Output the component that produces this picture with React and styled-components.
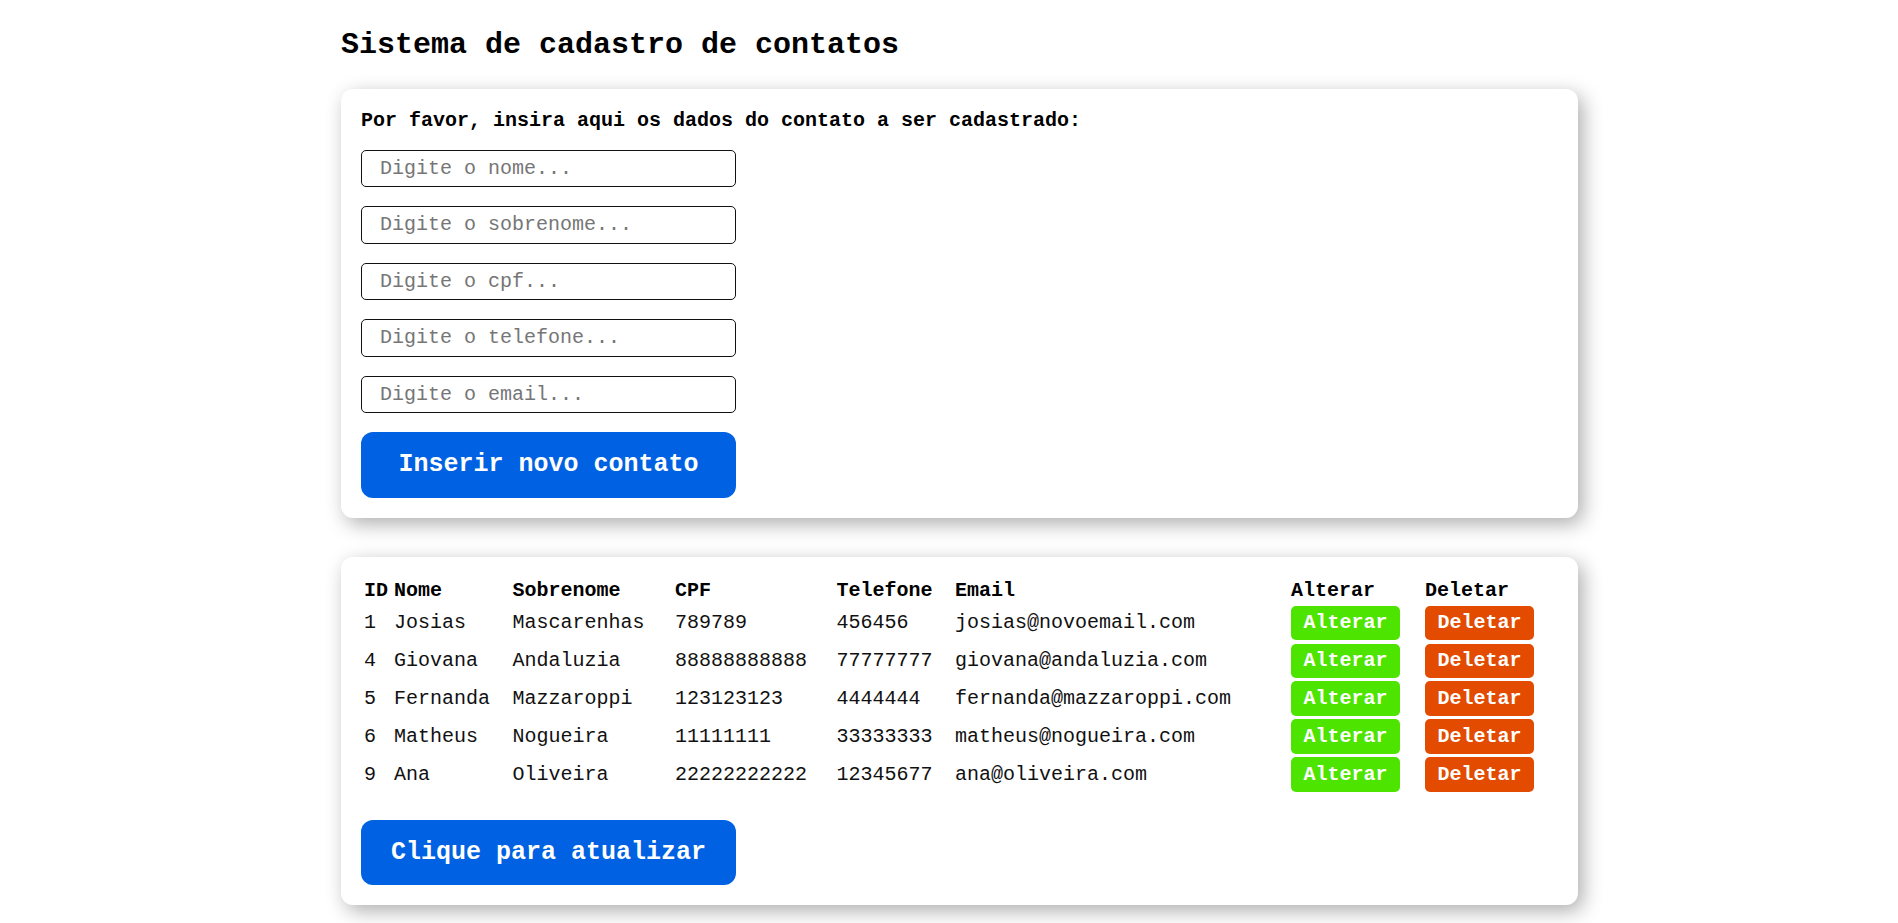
import React, { useState } from "react";
import styled, { createGlobalStyle } from "styled-components";

const GlobalStyle = createGlobalStyle`
  body {
    margin: 0;
    background: #fff;
    font-family: "Liberation Mono", "Courier New", monospace;
    color: #000;
  }
`;

const Container = styled.div`
  width: 1237px;
  margin-left: calc(50% - 608px);
  padding-top: 28px;
  padding-bottom: 20px;
`;

const Title = styled.h1`
  font-size: 30px;
  font-weight: 700;
  margin: 0 0 27px;
`;

const Card = styled.div`
  background: #fff;
  border-radius: 12px;
  padding: 20px;
  box-shadow: 5px 6px 20px rgba(0, 0, 0, 0.32);
  margin-bottom: ${(props) => props.gap || "0px"};
`;

const Subtitle = styled.p`
  font-size: 20px;
  font-weight: 700;
  margin: 0 0 17.5px;
`;

const Form = styled.div`
  display: flex;
  flex-direction: column;
  gap: 19px;
  width: 375px;
`;

const Input = styled.input`
  box-sizing: border-box;
  width: 375px;
  height: 37.5px;
  padding: 0 18px;
  border: 1px solid #111;
  border-radius: 5px;
  font-family: inherit;
  font-size: 20px;
  outline: none;

  &::placeholder {
    color: #767676;
  }
`;

const BigButton = styled.button`
  width: 375px;
  height: 65.5px;
  border: none;
  border-radius: 12px;
  background: #0061e2;
  color: #fff;
  font-family: inherit;
  font-size: 25px;
  font-weight: 700;
  cursor: pointer;
  margin-top: ${(props) => props.top || "0px"};
  display: block;
`;

const Table = styled.div`
  display: grid;
  grid-template-columns: 30px 118.5px 162.5px 161.5px 118.5px 336px 134px auto;
  row-gap: 3.5px;
  padding: 3px 0 2px 3px;
  align-items: center;
`;

const Row = styled.div`
  display: contents;
`;

const Head = styled.div`
  font-size: 20px;
  font-weight: 700;
  line-height: 22.66px;
`;

const Cell = styled.div`
  font-size: 20px;
  color: #111;
  white-space: nowrap;
`;

const ActionButton = styled.button`
  justify-self: start;
  height: 34.4px;
  padding: 0 12.4px;
  border: none;
  border-radius: 5px;
  background: ${(props) => (props.kind === "delete" ? "#e24b00" : "#4de400")};
  color: #fff;
  font-family: inherit;
  font-size: 20px;
  font-weight: 700;
  cursor: pointer;
`;

const contatos = [
  { id: 1, nome: "Josias", sobrenome: "Mascarenhas", cpf: "789789", telefone: "456456", email: "josias@novoemail.com" },
  { id: 4, nome: "Giovana", sobrenome: "Andaluzia", cpf: "88888888888", telefone: "77777777", email: "giovana@andaluzia.com" },
  { id: 5, nome: "Fernanda", sobrenome: "Mazzaroppi", cpf: "123123123", telefone: "4444444", email: "fernanda@mazzaroppi.com" },
  { id: 6, nome: "Matheus", sobrenome: "Nogueira", cpf: "11111111", telefone: "33333333", email: "matheus@nogueira.com" },
  { id: 9, nome: "Ana", sobrenome: "Oliveira", cpf: "22222222222", telefone: "12345677", email: "ana@oliveira.com" },
];

const campos = ["nome", "sobrenome", "cpf", "telefone", "email"];

const App = () => {
  const [lista] = useState(contatos);

  return (
    <Container>
      <GlobalStyle />
      <Title>Sistema de cadastro de contatos</Title>
      <Card gap="39px">
        <Subtitle>Por favor, insira aqui os dados do contato a ser cadastrado:</Subtitle>
        <Form>
          {campos.map((campo) => (
            <Input key={campo} placeholder={`Digite o ${campo}...`} />
          ))}
          <BigButton>Inserir novo contato</BigButton>
        </Form>
      </Card>
      <Card>
        <Table>
          <Row>
            <Head>ID</Head>
            <Head>Nome</Head>
            <Head>Sobrenome</Head>
            <Head>CPF</Head>
            <Head>Telefone</Head>
            <Head>Email</Head>
            <Head>Alterar</Head>
            <Head>Deletar</Head>
          </Row>
          {lista.map((c) => (
            <Row key={c.id}>
              <Cell>{c.id}</Cell>
              <Cell>{c.nome}</Cell>
              <Cell>{c.sobrenome}</Cell>
              <Cell>{c.cpf}</Cell>
              <Cell>{c.telefone}</Cell>
              <Cell>{c.email}</Cell>
              <ActionButton>Alterar</ActionButton>
              <ActionButton kind="delete">Deletar</ActionButton>
            </Row>
          ))}
        </Table>
        <BigButton top="26px">Clique para atualizar</BigButton>
      </Card>
    </Container>
  );
};

export default App;
